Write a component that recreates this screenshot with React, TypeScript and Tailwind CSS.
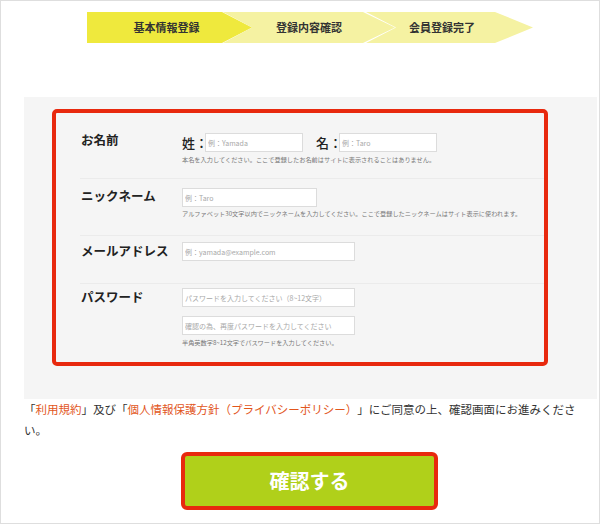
const font = "font-['Hiragino_Kaku_Gothic_ProN','Noto_Sans_CJK_JP','Liberation_Sans',sans-serif]";

const steps = [
  {
    label: "基本情報登録",
    className: "w-[165px] bg-[#efe93d] pr-[6px] [clip-path:polygon(0_0,135px_0,165px_50%,135px_100%,0_100%)]",
  },
  {
    label: "登録内容確認",
    className: "w-[172px] -ml-[29px] bg-[#f5f2a2] [clip-path:polygon(0_0,140px_0,172px_50%,140px_100%,0_100%,29px_50%)]",
  },
  {
    label: "会員登録完了",
    className: "w-[168px] -ml-[30px] bg-[#f5f2a2] pr-[14px] [clip-path:polygon(1px_0,130px_0,168px_50%,130px_100%,1px_100%,31px_50%)]",
  },
];

const Input = ({ placeholder, width }: { placeholder: string; width: string }) => (
  <input
    readOnly
    placeholder={placeholder}
    className={`${width} h-[19px] bg-white border border-[#dcdcdc] px-[2px] text-[7px] placeholder:text-[#a8a8a8] outline-none`}
  />
);

const Hint = ({ children, className = "" }: { children: string; className?: string }) => (
  <p className={`text-[6.2px] leading-[8px] text-[#777] whitespace-nowrap ${className}`}>{children}</p>
);

const Label = ({ children, className = "" }: { children: string; className?: string }) => (
  <div className={`w-[102px] shrink-0 pl-[1px] text-[12.5px] leading-[14px] font-bold text-[#222] ${className}`}>
    {children}
  </div>
);

export default function App() {
  return (
    <div className={`w-[600px] h-[524px] border border-[#dedede] bg-white text-[#333] overflow-hidden ${font}`}>
      {/* steps */}
      <div className="flex pt-[11px] pl-[86px]">
        {steps.map((s) => (
          <div
            key={s.label}
            className={`h-[31px] flex items-center justify-center text-[11px] font-bold text-[#333] ${s.className}`}
          >
            {s.label}
          </div>
        ))}
      </div>

      {/* form panel */}
      <div className="mt-[54px] ml-[23px] w-[573px] bg-[#f5f5f5] pt-[12px] pb-[33px]">
        <div className="ml-[28px] w-[496px] border-4 border-[#e8290e] rounded-[5px]">
          <div className="ml-[24px] flex border-b border-[#ebebeb] pt-[20px] pb-[14px]">
            <Label>お名前</Label>
            <div className="flex flex-col">
              <div className="flex items-center">
                <span className="w-[23px] text-[13px] leading-[19px] font-medium text-[#222]">姓：</span>
                <Input placeholder="例：Yamada" width="w-[98px]" />
                <span className="ml-[13px] w-[23px] text-[13px] leading-[19px] font-medium text-[#222]">名：</span>
                <Input placeholder="例：Taro" width="w-[98px]" />
              </div>
              <Hint className="mt-[4px]">本名を入力してください。ここで登録したお名前はサイトに表示されることはありません。</Hint>
            </div>
          </div>

          <div className="ml-[24px] flex border-b border-[#ebebeb] pt-[9px] pb-[17px]">
            <Label className="mt-[1px]">ニックネーム</Label>
            <div className="flex flex-col">
              <Input placeholder="例：Taro" width="w-[135px]" />
              <Hint className="mt-[3px]">
                アルファベット30文字以内でニックネームを入力してください。ここで登録したニックネームはサイト表示に使われます。
              </Hint>
            </div>
          </div>

          <div className="ml-[24px] flex border-b border-[#ebebeb] pt-[6px] pb-[22px]">
            <Label className="mt-[2px]">メールアドレス</Label>
            <Input placeholder="例：yamada@example.com" width="w-[173px]" />
          </div>

          <div className="ml-[24px] flex pt-[4px] pb-[15px]">
            <Label className="mt-[2px]">パスワード</Label>
            <div className="flex flex-col gap-[9px]">
              <Input placeholder="パスワードを入力してください（8~12文字）" width="w-[173px]" />
              <div className="flex flex-col">
                <Input placeholder="確認の為、再度パスワードを入力してください" width="w-[173px]" />
                <Hint className="mt-[4px]">半角英数字8~12文字でパスワードを入力してください。</Hint>
              </div>
            </div>
          </div>
        </div>
      </div>

      {/* agreement + submit */}
      <div className="ml-[23px] w-[560px]">
        <p className="text-[11.5px] leading-[21px] text-[#333] [text-spacing-trim:space-all]">
          <span>「</span>
          <span className="text-[#e2561c]">利用規約</span>
          <span>」及び「</span>
          <span className="text-[#e2561c]">個人情報保護方針（プライバシーポリシー）</span>
          <span>」にご同意の上、確認画面にお進みください。</span>
        </p>
        <button className="mt-[11px] ml-[157px] w-[257px] h-[58px] border-4 border-[#e8290e] rounded-[6px] bg-[#b0d01a] text-white text-[20px] font-bold">
          確認する
        </button>
      </div>
    </div>
  );
}
